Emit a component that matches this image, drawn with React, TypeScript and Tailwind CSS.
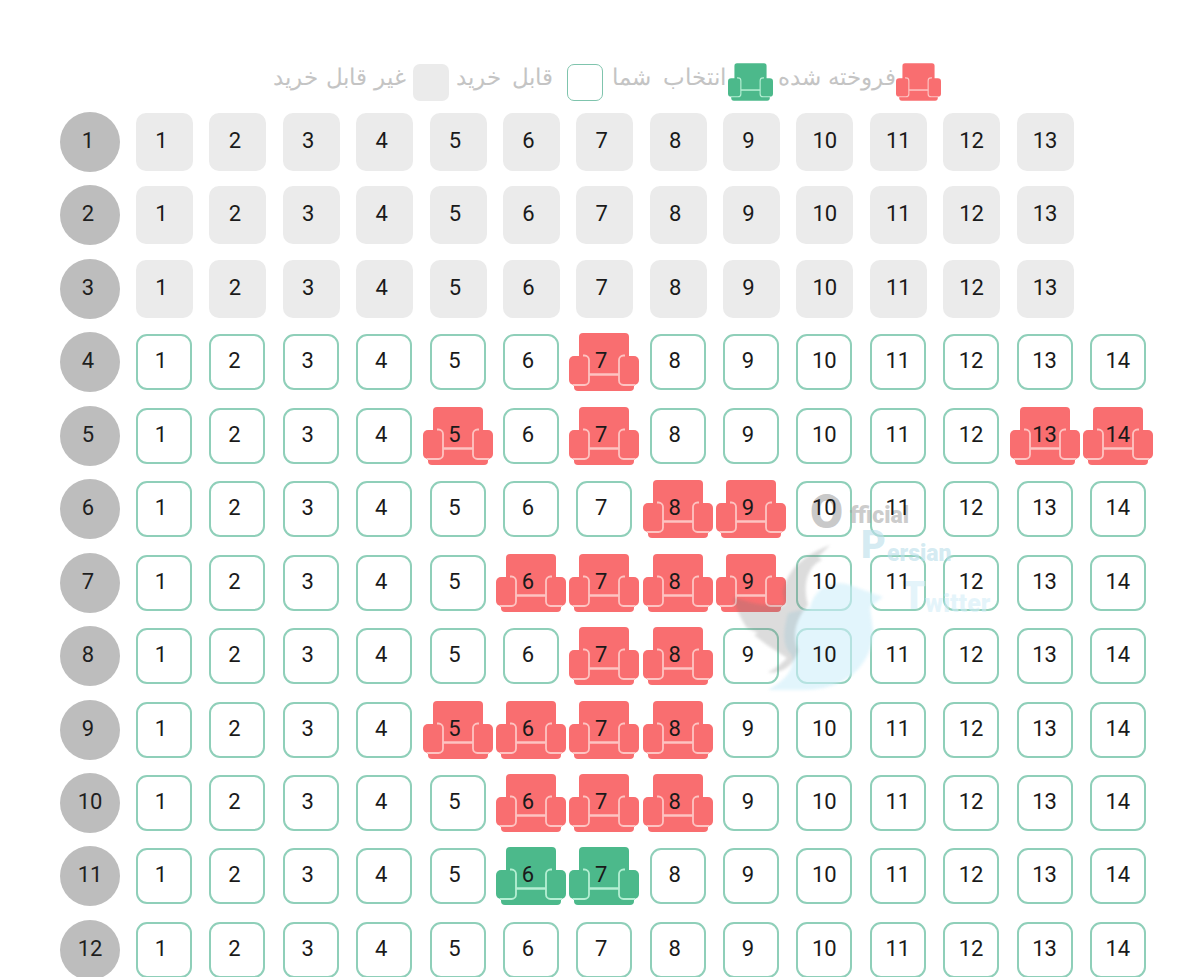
const soldSeats: Record<number, number[]> = {
  4: [7],
  5: [5, 7, 13, 14],
  6: [8, 9],
  7: [6, 7, 8, 9],
  8: [7, 8],
  9: [5, 6, 7, 8],
  10: [6, 7, 8],
};

const pickedSeats: Record<number, number[]> = {
  11: [6, 7],
};

const rows = Array.from({ length: 12 }, (_, i) => i + 1);

// armchair drawing, 70x58
function Chair({ fill, line, className }: { fill: string; line: string; className: string }) {
  return (
    <svg viewBox="0 0 70 58" className={className}>
      <rect x="10" y="0" width="50" height="46" rx="4" fill={fill} />
      <rect x="5" y="39" width="60" height="19" rx="4" fill={fill} />
      <path d="M17 41.5H53" stroke={line} strokeWidth="2.4" />
      <rect x="0" y="23" width="20" height="29" rx="5" fill={fill} />
      <rect x="50" y="23" width="20" height="29" rx="5" fill={fill} />
      {/* pale edge only on the inner side of the arms */}
      <path d="M14 22.5H15.5C18 22.5 20 24.5 20 27V47.5C20 50 18 52 15.5 52H4" fill="none" stroke={line} strokeWidth="1.8" />
      <path d="M56 22.5H54.5C52 22.5 50 24.5 50 27V47.5C50 50 52 52 54.5 52H66" fill="none" stroke={line} strokeWidth="1.8" />
    </svg>
  );
}

function Seat({ row, num }: { row: number; num: number }) {
  const label = (
    <span className={`relative z-10 -mt-[3px] text-[#1a1a1a] ${num < 10 ? "pr-[6px]" : ""}`}>{num}</span>
  );

  if (row <= 3) {
    return (
      <div className="w-[57px] h-[58px] rounded-[10px] bg-[#ebebeb] flex items-center justify-center">
        {label}
      </div>
    );
  }

  const sold = soldSeats[row]?.includes(num);
  const picked = pickedSeats[row]?.includes(num);

  if (sold || picked) {
    return (
      <div className="relative w-[56px] h-[56px] flex items-center justify-center">
        <Chair
          fill={sold ? "#f96e70" : "#4cb98b"}
          line={sold ? "#fdc4c2" : "#b5efd3"}
          className="absolute -left-[7px] -top-[1px] w-[70px] h-[58px]"
        />
        {label}
      </div>
    );
  }

  return (
    <div className="w-[56px] h-[56px] rounded-[11px] border-2 border-[#8fcfb9] bg-white flex items-center justify-center">
      {label}
    </div>
  );
}

function Legend() {
  return (
    <div dir="rtl" className="h-[50px] pr-[259px] flex items-center text-[23px] text-[#c4c4c4] font-['DejaVu_Sans',sans-serif] font-light">
      <Chair fill="#f96e70" line="#fdc4c2" className="w-[45px] h-[38px] shrink-0" />
      <span className="w-[123px] shrink-0 whitespace-nowrap -mt-[9px]">فروخته شده</span>
      <Chair fill="#4cb98b" line="#b5efd3" className="w-[45px] h-[38px] shrink-0" />
      <span className="w-[125px] shrink-0 whitespace-nowrap -mt-[9px] pr-[2px] [word-spacing:5px]">انتخاب شما</span>
      <div className="w-[36px] h-[37px] shrink-0 rounded-[7px] border border-[#7fc4ad] bg-white" />
      <span className="w-[118px] shrink-0 whitespace-nowrap -mt-[9px] pr-[14px] [word-spacing:4px]">قابل خرید</span>
      <div className="w-[36px] h-[37px] shrink-0 rounded-[7px] bg-[#ebebeb]" />
      <span className="shrink-0 whitespace-nowrap -mt-[9px] pr-[7px]">غیر قابل خرید</span>
    </div>
  );
}

function Watermark() {
  return (
    <div className="absolute left-[730px] top-[485px] w-[280px] h-[210px] pointer-events-none font-['Roboto',sans-serif] font-black">
      <svg viewBox="0 0 280 210" className="absolute inset-0 w-full h-full blur-[1.5px]">
        <path
          d="M80 123C85 100 105 95 120 100L153 112L140 122L143 145C143 180 115 205 75 205C60 205 50 205 38 205C55 195 65 185 62 170C50 160 55 140 58 128Z"
          fill="#cfeefa"
          fillOpacity="0.6"
        />
        <path
          d="M100 60C80 68 58 80 53 107L55 120C35 122 20 118 3 112C8 130 15 140 17 143L28 148L24 150L37 160L57 173C50 180 45 184 38 187C50 190 65 180 68 165C62 150 65 135 78 120C72 100 78 80 92 75L88 72Z"
          fill="#777777"
          fillOpacity="0.26"
        />
      </svg>
      <span className="absolute left-[80px] top-[3px] text-[48px] leading-none text-[#9a9a9a]/55">O</span>
      <span className="absolute left-[120px] top-[19px] text-[23px] leading-none text-[#9a9a9a]/50">fficial</span>
      <span className="absolute left-[131px] top-[41px] text-[38px] leading-none text-[#bcdfeb]/65">P</span>
      <span className="absolute left-[157px] top-[57px] text-[23px] leading-none text-[#bcdfeb]/65">ersian</span>
      <span className="absolute left-[172px] top-[92px] text-[38px] leading-none text-[#d3eef8]/60">T</span>
      <span className="absolute left-[195px] top-[106px] text-[25px] leading-none text-[#d3eef8]/60">witter</span>
    </div>
  );
}

export default function App() {
  return (
    <div className="relative w-[1200px] h-[977px] overflow-hidden bg-white pt-[57px] font-['Roboto',sans-serif] text-[22px]">
      <Legend />
      <div className="mt-[6px] flex flex-col gap-[15.45px]">
        {rows.map((row) => (
          <div key={row} className="h-[58px] flex items-center pl-[60px]">
            <div className="w-[60px] h-[60px] shrink-0 rounded-full bg-[#bdbdbd] flex items-center justify-center text-[#1f1f1f]">
              <span className={`-mt-[3px] ${row < 10 ? "pr-[4px]" : ""}`}>{row}</span>
            </div>
            <div className="ml-[16px] grid grid-cols-[repeat(14,56px)] gap-x-[17.38px] items-center">
              {Array.from({ length: row <= 3 ? 13 : 14 }, (_, i) => (
                <Seat key={i} row={row} num={i + 1} />
              ))}
            </div>
          </div>
        ))}
      </div>
      <Watermark />
    </div>
  );
}
